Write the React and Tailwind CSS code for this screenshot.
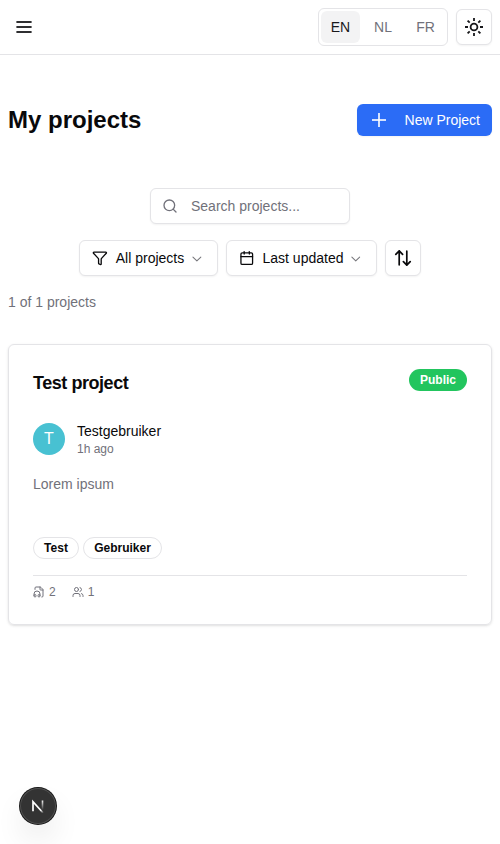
import { Calendar, ChevronDown, Funnel, FileHeadphone, Plus, Search, Users } from "lucide-react";

const outline = "flex h-9 items-center rounded-md border border-[#e4e4e7] bg-white shadow-xs";

function SunIcon() {
  return (
    <svg width="18" height="18" viewBox="0 0 18 18" fill="none" stroke="#18181b" strokeWidth="1.8">
      <circle cx="9" cy="9" r="3.4" />
      <path d="M9 0v3M9 15v3M0 9h3M15 9h3M2.6 2.6l2.1 2.1M13.3 13.3l2.1 2.1M2.6 15.4l2.1-2.1M13.3 4.7l2.1-2.1" />
    </svg>
  );
}

function SortIcon() {
  return (
    <svg width="18" height="18" viewBox="0 0 18 18" fill="none" stroke="currentColor" strokeWidth="1.7" strokeLinecap="round" strokeLinejoin="round">
      <path d="M1.8 5.3 5.2 1.8l3.4 3.5M5.2 1.8v14M9.4 12.7l3.4 3.5 3.4-3.5M12.8 16.2v-14" />
    </svg>
  );
}

function Header() {
  return (
    <header className="flex h-[55px] items-center justify-between border-b border-[#e4e4e7] pl-4 pr-2">
      <button aria-label="Menu">
        <svg width="16" height="12" viewBox="0 0 16 12" fill="#2f2f31">
          <rect x="0.4" y="0" width="15.2" height="2" />
          <rect x="0.4" y="5" width="15.2" height="2" />
          <rect x="0.4" y="10" width="15.2" height="2" />
        </svg>
      </button>
      <div className="flex items-center gap-2">
        <div className="flex h-[38px] w-[130px] items-center gap-1 rounded-md border border-[#e4e4e7] px-0.5 text-sm text-[#71717a]">
          <button className="h-8 w-[39px] rounded-md bg-[#f3f3f4] text-[#18181b]">EN</button>
          <button className="h-8 w-[38px]">NL</button>
          <button className="h-8 w-[39px]">FR</button>
        </div>
        <button className={`${outline} w-9 justify-center`} aria-label="Theme">
          <SunIcon />
        </button>
      </div>
    </header>
  );
}

function Filter({ icon, label, width }) {
  return (
    <button className={`${outline} ${width} gap-2 px-3`}>
      {icon}
      <span className="whitespace-nowrap">{label}</span>
      <ChevronDown size={16} strokeWidth={1.6} className="-ml-[3px] mt-px text-[#77777c]" />
    </button>
  );
}

function ProjectCard() {
  return (
    <article className="mt-8 h-[281px] rounded-md border border-[#e4e4e7] px-6 shadow-sm">
      <div className="flex items-start justify-between pt-6">
        <h2 className="text-lg leading-7 font-bold tracking-[-0.45px]">Test project</h2>
        <span className="flex h-[22px] w-[58px] items-center justify-center rounded-full bg-[#22c55e] text-xs font-bold text-white">Public</span>
      </div>
      <div className="mt-6 flex items-center gap-3">
        <span className="flex size-8 items-center justify-center rounded-full bg-[#48c1d2] text-base text-white">T</span>
        <div>
          <p className="text-sm leading-5">Testgebruiker</p>
          <p className="text-xs leading-4 text-[#71717a]">1h ago</p>
        </div>
      </div>
      <p className="mt-[17px] text-sm leading-5 text-[#71717a]">Lorem ipsum</p>
      <div className="mt-[43px] flex gap-1 text-xs font-bold">
        <span className="flex h-[22px] w-[46px] items-center justify-center rounded-full border border-[#e4e4e7]">Test</span>
        <span className="flex h-[22px] w-[79px] items-center justify-center rounded-full border border-[#e4e4e7]">Gebruiker</span>
      </div>
      <div className="mt-4 flex gap-4 border-t border-[#e4e4e7] pt-2 text-xs text-[#71717a]">
        <span className="flex items-center gap-1"><FileHeadphone size={12} />2</span>
        <span className="flex items-center gap-1"><Users size={12} />1</span>
      </div>
    </article>
  );
}

function DevBadge() {
  return (
    <div className="fixed bottom-5 left-5 flex size-9 items-center justify-center rounded-full bg-[#333] shadow-[0_0_0_1px_#171717,inset_0_0_0_1px_rgba(255,255,255,0.14),0_16px_32px_-8px_rgba(0,0,0,0.24)]">
      <svg width="14" height="14" viewBox="0 0 14 14" fill="none">
        <defs>
          <linearGradient id="diagonal" x1="7" y1="7" x2="12.5" y2="14" gradientUnits="userSpaceOnUse">
            <stop stopColor="white" />
            <stop offset="0.55" stopColor="white" />
            <stop offset="1" stopColor="white" stopOpacity="0" />
          </linearGradient>
          <linearGradient id="stem" x1="0" y1="1" x2="0" y2="11" gradientUnits="userSpaceOnUse">
            <stop stopColor="white" />
            <stop offset="1" stopColor="white" stopOpacity="0" />
          </linearGradient>
        </defs>
        <path d="M2 12.2V2.6L12.2 14" stroke="url(#diagonal)" strokeWidth="1.7" />
        <path d="M11.5 1.5v10" stroke="url(#stem)" strokeWidth="1.6" />
      </svg>
    </div>
  );
}

export default function App() {
  return (
    <div className="min-h-screen bg-white text-[#09090b] [font-family:'Liberation_Sans',Arial,sans-serif]">
      <Header />
      <main className="px-2 pt-[49px]">
        <div className="flex items-center justify-between">
          <h1 className="text-2xl leading-8 font-bold">My projects</h1>
          <button className="flex h-8 w-[135px] items-center justify-between rounded-md bg-[#2b6cf6] pr-3 pl-2.5 text-sm text-white shadow-xs">
            <Plus size={24} strokeWidth={1.6} strokeLinecap="butt" />
            <span>New Project</span>
          </button>
        </div>
        <div className="mt-[52px] flex flex-col items-center gap-4 text-sm">
          <label className={`${outline} w-[200px] gap-[13px] pl-[11px] text-[#71717a]`}>
            <Search size={16} />
            <input className="w-[140px] outline-none placeholder:text-[#71717a]" placeholder="Search projects..." />
          </label>
          <div className="flex gap-2">
            <Filter width="w-[139px]" icon={<Funnel size={16} />} label="All projects" />
            <Filter width="w-[151px]" icon={<Calendar size={16} />} label="Last updated" />
            <button className={`${outline} w-9 justify-center`} aria-label="Sort">
              <SortIcon />
            </button>
          </div>
        </div>
        <p className="mt-4 text-sm leading-5 text-[#71717a]">1 of 1 projects</p>
        <ProjectCard />
      </main>
      <DevBadge />
    </div>
  );
}
